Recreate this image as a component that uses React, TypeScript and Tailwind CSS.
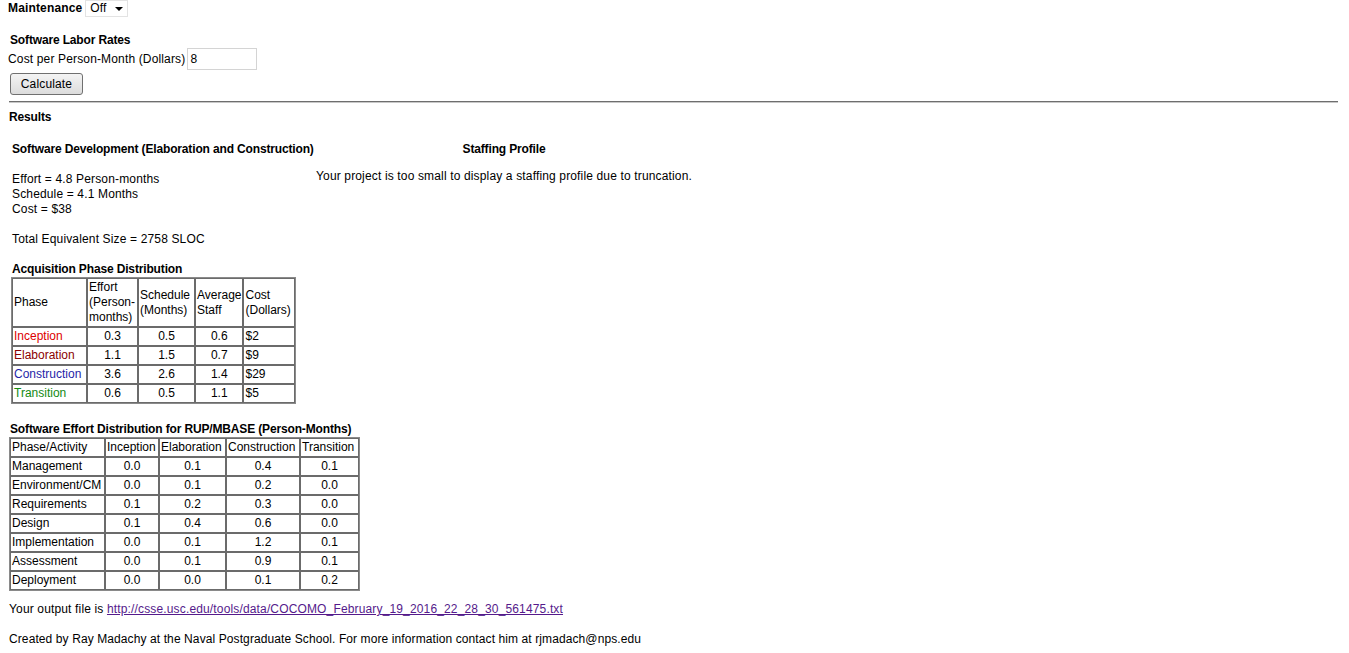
import React from "react";

const phases = [
  { name: "Inception", color: "text-[#dd0000]", effort: "0.3", schedule: "0.5", staff: "0.6", cost: "$2" },
  { name: "Elaboration", color: "text-[#8b0000]", effort: "1.1", schedule: "1.5", staff: "0.7", cost: "$9" },
  { name: "Construction", color: "text-[#1f1fa8]", effort: "3.6", schedule: "2.6", staff: "1.4", cost: "$29" },
  { name: "Transition", color: "text-[#138a13]", effort: "0.6", schedule: "0.5", staff: "1.1", cost: "$5" },
];

const activities = [
  ["Management", "0.0", "0.1", "0.4", "0.1"],
  ["Environment/CM", "0.0", "0.1", "0.2", "0.0"],
  ["Requirements", "0.1", "0.2", "0.3", "0.0"],
  ["Design", "0.1", "0.4", "0.6", "0.0"],
  ["Implementation", "0.0", "0.1", "1.2", "0.1"],
  ["Assessment", "0.0", "0.1", "0.9", "0.1"],
  ["Deployment", "0.0", "0.0", "0.1", "0.2"],
];

// old-school border="1" cell look
const td = "border border-[#6b6b6b] px-px py-px align-middle";
const heading = "font-bold tracking-[-0.15px] whitespace-nowrap";

const App = () => {
  return (
    <div className="min-h-[653px] bg-white px-2 text-[12px] leading-[15px] tracking-[0.15px] text-black font-['Liberation_Sans',Arial,sans-serif]">
      {/* maintenance selector */}
      <div className="flex h-[17px] items-center">
        <span className="font-bold">Maintenance</span>
        <span className="relative ml-[3px] inline-flex h-[17px] w-[43px] items-center border border-[#e3e3e3] bg-white">
          <select className="h-full w-full appearance-none bg-transparent pl-[4px] text-[12px] outline-none" defaultValue="Off">
            <option>Off</option>
            <option>On</option>
          </select>
          <svg className="pointer-events-none absolute right-[4px] top-[6px]" width="8" height="4" viewBox="0 0 8 4">
            <path d="M0 0h8L4 4z" fill="#000" />
          </svg>
        </span>
      </div>

      {/* labor rates */}
      <div className={`mt-[16px] pl-[2px] ${heading}`}>Software Labor Rates</div>
      <div className="flex h-[22px] items-center">
        <span>Cost per Person-Month (Dollars)</span>
        <input
          type="text"
          defaultValue="8"
          className="ml-[2px] h-[22px] w-[70px] border border-[#d4d4d4] px-[2px] text-[12px] outline-none"
        />
      </div>
      <button
        type="button"
        className="mt-[3px] ml-[2px] flex h-[22px] w-[73px] items-center justify-center rounded-[3px] border border-[#707070] bg-gradient-to-b from-[#f4f4f4] to-[#dcdcdc] text-[12px]"
      >
        Calculate
      </button>

      <div className="mt-[6px] ml-px mr-[3px] h-[2px] border-t border-b border-t-[#6e6e6e] border-b-[#c8c8c8]" />

      <div className={`mt-[7px] pl-px ${heading}`}>Results</div>

      {/* results: development + staffing profile */}
      <div className="mt-[17px] flex">
        <div className="w-[308px] pl-[3px]">
          <div className={`pl-px ${heading}`}>Software Development (Elaboration and Construction)</div>
          <div className="mt-[15px] pl-px">
            <div>Effort = 4.8 Person-months</div>
            <div>Schedule = 4.1 Months</div>
            <div>Cost = $38</div>
          </div>
          <div className="mt-[15px] pl-px">Total Equivalent Size = 2758 SLOC</div>
          <div className={`mt-[15px] pl-px ${heading}`}>Acquisition Phase Distribution</div>
          <table className="border-separate border-spacing-0 border border-[#8a8a8a] tracking-normal">
            <tbody>
              <tr>
                <td className={`${td} w-[75px]`}>Phase</td>
                <td className={`${td} w-[51px]`}>
                  Effort
                  <br />
                  (Person-
                  <br />
                  months)
                </td>
                <td className={`${td} w-[57px]`}>
                  Schedule
                  <br />
                  (Months)
                </td>
                <td className={`${td} w-[47px]`}>
                  Average
                  <br />
                  Staff
                </td>
                <td className={`${td} w-[52px]`}>
                  Cost
                  <br />
                  (Dollars)
                </td>
              </tr>
              {phases.map((p) => (
                <tr key={p.name}>
                  <td className={`${td} ${p.color}`}>{p.name}</td>
                  <td className={`${td} text-center`}>{p.effort}</td>
                  <td className={`${td} text-center`}>{p.schedule}</td>
                  <td className={`${td} text-center`}>{p.staff}</td>
                  <td className={td}>{p.cost}</td>
                </tr>
              ))}
            </tbody>
          </table>
        </div>

        <div className="w-[376px] text-center">
          <div className={heading}>Staffing Profile</div>
          <div className="mt-[12px] whitespace-nowrap">Your project is too small to display a staffing profile due to truncation.</div>
        </div>
      </div>

      {/* effort distribution */}
      <div className={`mt-[18px] pl-[2px] ${heading}`}>Software Effort Distribution for RUP/MBASE (Person-Months)</div>
      <table className="ml-px border-separate border-spacing-0 border border-[#8a8a8a] tracking-normal">
        <tbody>
          <tr>
            <td className={`${td} w-[95px]`}>Phase/Activity</td>
            <td className={`${td} w-[54px]`}>Inception</td>
            <td className={`${td} w-[67px]`}>Elaboration</td>
            <td className={`${td} w-[74px]`}>Construction</td>
            <td className={`${td} w-[59px]`}>Transition</td>
          </tr>
          {activities.map((row) => (
            <tr key={row[0]}>
              <td className={td}>{row[0]}</td>
              {row.slice(1).map((v, i) => (
                <td key={i} className={`${td} text-center`}>
                  {v}
                </td>
              ))}
            </tr>
          ))}
        </tbody>
      </table>

      <div className="mt-[11px] pl-px">
        Your output file is{" "}
        <a href="#" className="text-[#551a8b] underline">
          http://csse.usc.edu/tools/data/COCOMO_February_19_2016_22_28_30_561475.txt
        </a>
      </div>
      <div className="mt-[15px] pl-px tracking-[0.1px]">
        Created by Ray Madachy at the Naval Postgraduate School. For more information contact him at rjmadach@nps.edu
      </div>
    </div>
  );
};

export default App;
